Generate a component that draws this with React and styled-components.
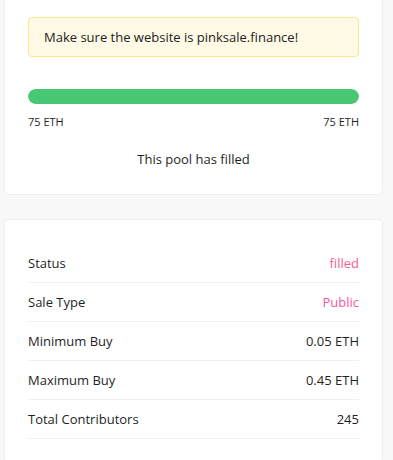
import React from "react";
import styled, { createGlobalStyle } from "styled-components";

const Global = createGlobalStyle`
  html, body { margin: 0; padding: 0; background: #f8f8f8; }
  body { font-family: "Open Sans", "Noto Sans", sans-serif; color: #1f1f1f; }
  * { box-sizing: border-box; }
`;

const Page = styled.div`
  display: flex;
  flex-direction: column;
  gap: 24px;
  padding: 0 10px 0 4px;
  margin-top: -8px;
`;

const Card = styled.div`
  background: #fff;
  border: 1px solid #efefef;
  border-radius: 5px;
  padding: 24px 23px 23px;
`;

const Alert = styled.div`
  background: #fffae6;
  border: 1px solid #fde68c;
  border-radius: 4px;
  padding: 0 15px;
  height: 40px;
  display: flex;
  align-items: center;
  font-size: 13px;
  color: #222;
`;

const Bar = styled.div`
  margin-top: 32px;
  height: 15px;
  border-radius: 8px;
  background: #f0f0f0;
  overflow: hidden;
`;

const Fill = styled.div`
  height: 100%;
  background: #48c774;
  border-radius: 8px;
`;

const Range = styled.div`
  display: flex;
  justify-content: space-between;
  font-size: 11px;
  margin-top: 10px;
  line-height: 16px;
  color: #1f1f1f;
`;

const Note = styled.div`
  text-align: center;
  font-size: 13px;
  margin-top: 19px;
  line-height: 20px;
  padding-bottom: 2px;
`;

const List = styled.div`
  display: flex;
  flex-direction: column;
`;

const Row = styled.div`
  display: flex;
  justify-content: space-between;
  align-items: center;
  height: 39px;
  padding-bottom: 1px;
  border-bottom: 1px solid #efefef;
  font-size: 13px;
`;

const Value = styled.span`
  color: ${(p) => (p.$pink ? "#f95997" : "#1f1f1f")};
`;

const rows = [
  ["Status", "filled", true],
  ["Sale Type", "Public", true],
  ["Minimum Buy", "0.05 ETH"],
  ["Maximum Buy", "0.45 ETH"],
  ["Total Contributors", "245"],
];

export default function App() {
  const pct = 100;
  return (
    <>
      <Global />
      <Page>
        <Card>
          <Alert>Make sure the website is pinksale.finance!</Alert>
          <Bar>
            <Fill style={{ width: `${pct}%` }} />
          </Bar>
          <Range>
            <span>75 ETH</span>
            <span>75 ETH</span>
          </Range>
          <Note>This pool has filled</Note>
        </Card>
        <Card>
          <List>
            {rows.map(([k, v, pink]) => (
              <Row key={k}>
                <span>{k}</span>
                <Value $pink={pink}>{v}</Value>
              </Row>
            ))}
          </List>
        </Card>
      </Page>
    </>
  );
}
